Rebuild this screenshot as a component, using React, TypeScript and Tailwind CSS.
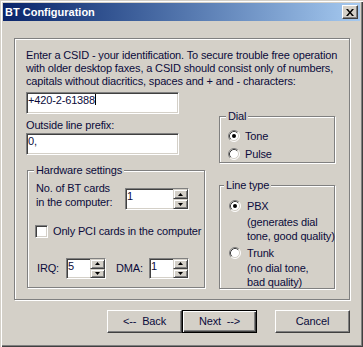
import React from "react";

const sunken =
  "bg-white border border-t-[#808080] border-l-[#808080] border-b-white border-r-white shadow-[inset_1px_1px_0_#404040,inset_-1px_-1px_0_#d4d0c8]";

const raisedSmall =
  "bg-[#d4d0c8] border border-t-[#d4d0c8] border-l-[#d4d0c8] border-r-[#404040] border-b-[#404040] shadow-[inset_1px_1px_0_#fff,inset_-1px_-1px_0_#808080]";

interface GroupBoxProps {
  label: string;
  labelLeft: string;
  className: string;
  children: React.ReactNode;
}

const GroupBox: React.FC<GroupBoxProps> = ({ label, labelLeft, className, children }) => (
  <div
    className={`relative border border-[#808080] shadow-[inset_1px_1px_0_#fff,1px_1px_0_#fff] ${className}`}
  >
    <span className={`absolute -top-[7px] ${labelLeft} bg-[#d4d0c8] px-[2px] leading-[13px]`}>
      {label}
    </span>
    {children}
  </div>
);

const Radio = ({ checked }: { checked?: boolean }) => (
  <svg width="12" height="12" viewBox="0 0 12 12" className="shrink-0">
    <circle cx="6" cy="6" r="5" fill="#fff" />
    <path d="M2.11 9.89A5.5 5.5 0 0 1 9.89 2.11" stroke="#808080" fill="none" />
    <path d="M9.89 2.11A5.5 5.5 0 0 1 2.11 9.89" stroke="#fff" fill="none" />
    <path d="M2.82 9.18A4.5 4.5 0 0 1 9.18 2.82" stroke="#404040" fill="none" />
    <path d="M9.18 2.82A4.5 4.5 0 0 1 2.82 9.18" stroke="#d4d0c8" fill="none" />
    {checked && <circle cx="6" cy="6" r="2" fill="#000" />}
  </svg>
);

const Arrow = ({ up }: { up?: boolean }) => (
  <svg width="5" height="3" viewBox="0 0 5 3">
    <polygon points={up ? "2.5,0 5,3 0,3" : "0,0 5,0 2.5,3"} fill="#000" />
  </svg>
);

const Spin = ({ value, size }: { value: string; size: string }) => (
  <div className={`flex ${sunken} ${size}`}>
    <span className="flex-1 pl-[1px] leading-[15px]">{value}</span>
    <div className="flex flex-col w-[15px]">
      <div className={`flex-1 flex items-center justify-center ${raisedSmall}`}>
        <Arrow up />
      </div>
      <div className={`flex-1 flex items-center justify-center ${raisedSmall}`}>
        <Arrow />
      </div>
    </div>
  </div>
);

const Button = ({ label, isDefault }: { label: string; isDefault?: boolean }) => (
  <div
    className={`w-[75px] h-[23px] flex items-center justify-center whitespace-pre ${
      isDefault
        ? "border border-black shadow-[inset_1px_1px_0_#fff,inset_-1px_-1px_0_#404040,inset_-2px_-2px_0_#808080]"
        : "border border-t-white border-l-white border-r-[#404040] border-b-[#404040] shadow-[inset_-1px_-1px_0_#808080]"
    }`}
  >
    {label}
  </div>
);

export default function App() {
  return (
    <div className="w-[363px] h-[347px] bg-[#d4d0c8] p-[3px] flex flex-col whitespace-nowrap font-['Liberation_Sans',Arial,sans-serif] text-[11px] leading-[13px] tracking-[-0.15px] text-[#0b0b3b] shadow-[inset_1px_1px_0_#d4d0c8,inset_2px_2px_0_#fff,inset_-1px_-1px_0_#404040,inset_-2px_-2px_0_#808080]">
      {/* title bar */}
      <div className="h-[18px] shrink-0 flex items-center justify-between pl-[2px] pr-[2px] bg-linear-to-r from-[#0a246a] to-[#a6caf0]">
        <span className="font-bold text-white tracking-normal">BT Configuration</span>
        <div className="w-[16px] h-[14px] flex items-center justify-center bg-[#d4d0c8] border border-t-white border-l-white border-r-[#404040] border-b-[#404040] shadow-[inset_-1px_-1px_0_#808080]">
          <svg width="8" height="7" viewBox="0 0 8 7">
            <path d="M0 0h2l2 2.5 2-2.5h2L5 3.5 8 7H6L4 4.5 2 7H0l3-3.5z" fill="#000" />
          </svg>
        </div>
      </div>

      {/* main panel */}
      <div className="ml-[11px] mt-[17px] w-[336px] h-[262px] shrink-0 border border-[#808080] shadow-[inset_1px_1px_0_#fff,1px_1px_0_#fff] pt-[10px] pl-[11px]">
        <p>
          Enter a CSID - your identification. To secure trouble free operation
          <br />
          with older desktop faxes, a CSID should consist only of numbers,
          <br />
          capitals without diacritics, spaces and + and - characters:
        </p>

        <div className="flex mt-[4px]">
          <div className="flex flex-col w-[179px]">
            <div className={`w-[153px] h-[22px] flex items-start pl-[1px] ${sunken}`}>
              <span className="leading-[15px]">+420-2-61388</span>
              <span className="inline-block w-[1px] h-[11px] mt-[1px] bg-black" />
            </div>
            <span className="mt-[5px]">Outside line prefix:</span>
            <div className={`w-[153px] h-[22px] mt-[1px] flex items-start pl-[1px] ${sunken}`}>
              <span className="leading-[15px]">0,</span>
            </div>

            <GroupBox label="Hardware settings" labelLeft="left-[6px]" className="ml-[1px] mt-[15px] w-[178px] h-[118px] pt-[10px] pl-[8px]">
              <div className="flex items-start">
                <span className="w-[89px] leading-[14px]">
                  No. of BT cards
                  <br />
                  in the computer:
                </span>
                <Spin value="1" size="w-[64px] h-[22px] mt-[7px]" />
              </div>
              <div className="flex items-center gap-[5px] mt-[15px] -ml-[1px]">
                <div className={`w-[13px] h-[13px] shrink-0 ${sunken}`} />
                <span>Only PCI cards in the computer</span>
              </div>
              <div className="flex items-center mt-[20px] ml-[1px]">
                <span className="w-[29px]">IRQ:</span>
                <Spin value="5" size="w-[40px] h-[21px]" />
                <span className="w-[33px] ml-[10px]">DMA:</span>
                <Spin value="1" size="w-[40px] h-[21px]" />
              </div>
            </GroupBox>
          </div>

          <div className="flex flex-col w-[116px] ml-[14px]">
            <GroupBox label="Dial" labelLeft="left-[6px]" className="mt-[24px] h-[47px] pt-[13px] pl-[8px]">
              <div className="flex items-center gap-[5px] h-[12px]">
                <Radio checked />
                <span>Tone</span>
              </div>
              <div className="flex items-center gap-[5px] h-[12px] mt-[6px]">
                <Radio />
                <span>Pulse</span>
              </div>
            </GroupBox>

            <GroupBox label="Line type" labelLeft="left-[4px]" className="mt-[22px] h-[104px] pt-[14px] pl-[9px]">
              <div className="flex items-center gap-[6px] h-[12px]">
                <Radio checked />
                <span>PBX</span>
              </div>
              <p className="ml-[18px] mt-[3px] leading-[14px]">
                (generates dial
                <br />
                tone, good quality)
              </p>
              <div className="flex items-center gap-[6px] h-[12px] mt-[4px]">
                <Radio />
                <span>Trunk</span>
              </div>
              <p className="ml-[18px] mt-[2px] leading-[14px]">
                (no dial tone,
                <br />
                bad quality)
              </p>
            </GroupBox>
          </div>
        </div>
      </div>

      {/* buttons */}
      <div className="flex mt-[10px] ml-[104px]">
        <Button label="<--  Back" />
        <Button label="Next  -->" isDefault />
        <div className="ml-[18px]">
          <Button label="Cancel" />
        </div>
      </div>
    </div>
  );
}
